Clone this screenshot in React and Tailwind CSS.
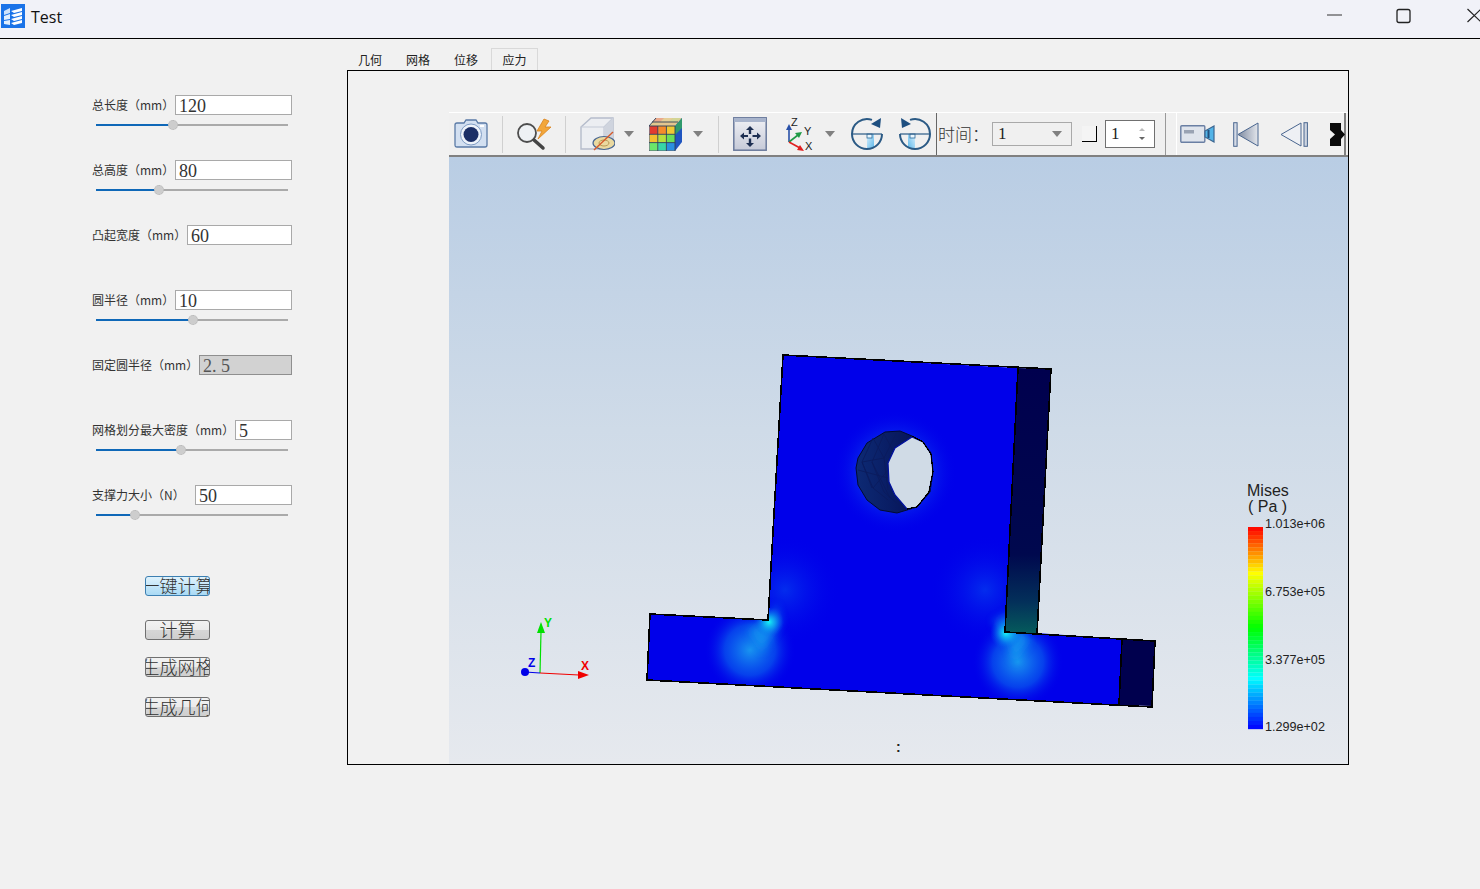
import React from "react";

const fields = [
  { label: "总长度（mm）", value: "120", inputWidth: "w-[117px]", slider: 173 },
  { label: "总高度（mm）", value: "80", inputWidth: "w-[117px]", slider: 159 },
  { label: "凸起宽度（mm）", value: "60", inputWidth: "w-[105px]" },
  { label: "圆半径（mm）", value: "10", inputWidth: "w-[117px]", slider: 193 },
  { label: "固定圆半径（mm）", value: "2. 5", inputWidth: "w-[93px]", disabled: true },
  { label: "网格划分最大密度（mm）", value: "5", inputWidth: "w-[57px]", slider: 181 },
  { label: "支撑力大小（N）", value: "50", inputWidth: "w-[97px]", slider: 135 },
];

const tabs = ["几何", "网格", "位移"];

// colour bar bands, top to bottom
const barStops = [
  [0, [255, 0, 0]],
  [0.23, [255, 255, 0]],
  [0.5, [0, 255, 0]],
  [0.75, [0, 255, 255]],
  [1, [0, 0, 255]],
];
const barColor = (t) => {
  for (let i = 1; i < barStops.length; i++) {
    if (t <= barStops[i][0]) {
      const [a, ca] = barStops[i - 1];
      const [b, cb] = barStops[i];
      const k = (t - a) / (b - a);
      const c = ca.map((v, j) => Math.round(v + (cb[j] - v) * k));
      return `rgb(${c[0]},${c[1]},${c[2]})`;
    }
  }
  return "rgb(0,0,255)";
};
const bands = Array.from({ length: 50 }, (_, i) => barColor((i + 0.5) / 50));

const AppIcon = () => (
  <svg width="24" height="24" viewBox="0 0 24 24" className="ml-px shrink-0">
    <rect width="24" height="24" fill="#1a73e8" />
    <path d="M3 7 L9 4 L9 9 L3 11 Z" fill="#cfe3fb" />
    <path d="M10 7 L21 4 L21 7 L13 9 Z M10 11 L21 8 L21 11 L13 13 Z" fill="#fff" />
    <path d="M3 12 L9 10 L9 15 L3 16 Z M3 17 L9 16 L9 21 L3 20 Z" fill="#e3effd" />
    <path d="M10 15 L21 12 L21 15 L13 17 Z M10 19 L21 16 L21 19 L13 21 Z" fill="#fff" />
  </svg>
);

const WindowButtons = () => (
  <svg width="153" height="38" viewBox="1327 0 153 38" className="shrink-0">
    <path d="M1327 15 H1342" stroke="#333" strokeWidth="1" />
    <rect x="1397" y="9.5" width="13" height="13" rx="2" fill="none" stroke="#222" strokeWidth="1.3" />
    <path d="M1467.5 9 L1481 22 M1481 9 L1467.5 22" stroke="#222" strokeWidth="1.2" />
  </svg>
);

const Slider = ({ end }) => {
  const pct = ((end - 96) / 192) * 100;
  return (
    <div className="relative ml-1 mt-[9px] h-[2px] w-[192px] bg-[#aaaaaa]">
      <div className="h-full bg-[#0f68b8]" style={{ width: `${pct}%` }} />
      <div
        className="absolute top-[-4px] ml-[-5px] size-[10px] rounded-full border border-dotted border-[#b5b5b5] bg-[#cdcdcd]"
        style={{ left: `${pct}%` }}
      />
    </div>
  );
};

const FieldRow = ({ field }) => (
  <div className="h-[65px]">
    <div className="flex h-5 items-center justify-between">
      <span className="whitespace-nowrap text-[12px] text-[#333333]">{field.label}</span>
      <div
        className={`${field.inputWidth} flex h-5 items-center border pl-[3px] pt-px font-['Liberation_Serif',serif] text-[18px] leading-none ${
          field.disabled ? "border-[#8f8f8f] bg-[#d2d2d2] text-[#555555]" : "border-[#a9a9a9] bg-white text-[#333333]"
        }`}
      >
        {field.value}
      </div>
    </div>
    {field.slider && <Slider end={field.slider} />}
  </div>
);

const ActionButton = ({ children, active, className }) => (
  <button
    className={`flex h-5 w-[65px] items-center justify-center overflow-hidden rounded-[3px] border pb-[2px] text-[18px] leading-none text-[#333333] ${
      active
        ? "border-[#3c7fb1] bg-gradient-to-b from-[#dff2fc] to-[#a9daf5]"
        : "border-[#707070] bg-[linear-gradient(#f2f2f2_0%,#ebebeb_50%,#d6d6d6_50%,#cfcfcf_100%)]"
    } ${className}`}
  >
    <span className="shrink-0 whitespace-nowrap font-['Noto_Sans_CJK_SC',serif] font-light">{children}</span>
  </button>
);

const Sep = ({ className }) => <div className={`h-[37px] w-px shrink-0 bg-[#d0d0d0] ${className}`} />;

const DropArrow = ({ className }) => (
  <svg width="10" height="6" viewBox="0 0 10 6" className={`shrink-0 ${className}`}>
    <path d="M0 0 H10 L5 6 Z" fill="#808080" />
  </svg>
);

const CameraIcon = ({ className }) => (
  <svg width="34" height="30" viewBox="0 0 34 30" className={`shrink-0 ${className}`}>
    <path d="M1 6 Q1 4 3 4 H10 L12 1 H22 L24 4 H31 Q33 4 33 6 V26 Q33 28 31 28 H3 Q1 28 1 26 Z" fill="#d3e0f1" stroke="#5a7aa6" strokeWidth="1.3" />
    <circle cx="17" cy="15.5" r="10.5" fill="#eef3fa" stroke="#7f9cc4" />
    <circle cx="17" cy="15.5" r="7.5" fill="#1b2f66" />
    <rect x="26" y="6" width="4" height="2" fill="#fff" />
  </svg>
);

const ZoomIcon = ({ className }) => (
  <svg width="35" height="33" viewBox="0 0 35 33" className={`shrink-0 ${className}`}>
    <circle cx="10" cy="15" r="9" fill="#eef1f4" stroke="#4d4d4d" strokeWidth="1.8" />
    <path d="M17 22 L26 30" stroke="#444" strokeWidth="3.5" strokeLinecap="round" />
    <path d="M27 1 L20 13 L25 13 L21 21 L34 9 L28 9 L32 3 Z" fill="#f2a63a" stroke="#d9821a" strokeWidth="0.8" />
  </svg>
);

const CubeIcon = ({ className }) => (
  <svg width="35" height="34" viewBox="0 0 35 34" className={`shrink-0 ${className}`}>
    <path d="M1 10 L11 1 H33 V22 L24 32 H1 Z" fill="#eceef2" stroke="#b5bccb" strokeWidth="1.4" />
    <path d="M1 10 H24 V32 M24 10 L33 1" fill="none" stroke="#c3c9d6" strokeWidth="1.2" />
    <path d="M24 10 L33 1 V22 L24 32 Z" fill="#cfd4de" />
    <ellipse cx="24" cy="26" rx="11" ry="6.5" fill="#ead9a0" stroke="#4a6791" strokeWidth="1.2" />
    <ellipse cx="24" cy="26" rx="5" ry="3" fill="none" stroke="#b79a55" />
    <path d="M14 33 L33 15" stroke="#d65a2b" strokeWidth="1.4" />
  </svg>
);

const ColorCubeIcon = ({ className }) => {
  const front = ["#e23b30", "#f58b2c", "#f0c933", "#f2c02e", "#b5e03c", "#6adf58", "#6ae56a", "#36d6a8", "#2a8fe0"];
  const top = ["#eaa98c", "#e5cf97", "#d3d596"];
  return (
    <svg width="34" height="33" viewBox="0 0 34 33" className={`shrink-0 ${className}`}>
      <path d="M0 8 L7 0 H33 L26 8 Z" fill="#e3c68f" />
      {top.map((c, i) => (
        <path key={i} d={`M${3 + i * 8.5} 4 L${7 + i * 8.5} 0 H${15 + i * 8.5} L${11 + i * 8.5} 4 Z`} fill={c} />
      ))}
      {front.map((c, i) => (
        <rect key={i} x={0.5 + (i % 3) * 8.6} y={8 + Math.floor(i / 3) * 8.3} width="8.4" height="8.1" fill={c} />
      ))}
      <path d="M26 8 L33 0 V24 L26 33 Z" fill="#1f55c0" />
      <path d="M26 8 L33 0 V10 L26 17 Z" fill="#2f9a6c" />
      <path d="M0 8 H26 V33 H0 Z M8.8 8 V33 M17.4 8 V33 M0 16.3 H26 M0 24.6 H26 M3 4 H29 M7 0 L0 8" fill="none" stroke="#2c3e58" strokeWidth="0.9" />
    </svg>
  );
};

const FitIcon = ({ className }) => (
  <svg width="34" height="34" viewBox="0 0 34 34" className={`shrink-0 ${className}`}>
    <defs>
      <linearGradient id="fitBg" x1="0" y1="0" x2="0" y2="1">
        <stop offset="0" stopColor="#f0f1f5" />
        <stop offset="1" stopColor="#c6cad8" />
      </linearGradient>
    </defs>
    <rect x="0.8" y="0.8" width="32.4" height="32.4" fill="url(#fitBg)" stroke="#6a7a9c" strokeWidth="1.5" />
    <rect x="1" y="1" width="32" height="4" fill="#a8b4cc" />
    <path d="M17 9 L21 13 H18.2 V17 H15.8 V13 H13 Z M17 30 L13 26 H15.8 V21.5 H18.2 V26 H21 Z M7 19 L11 15.5 V18 H15 V20 H11 V22.5 Z M28 19 L24 15.5 V18 H19.5 V20 H24 V22.5 Z" fill="#1e2f52" />
  </svg>
);

const AxesIcon = ({ className }) => (
  <svg width="32" height="36" viewBox="785 116 32 36" className={`shrink-0 ${className}`}>
    <path d="M789 142 V127" stroke="#2850a8" strokeWidth="1.6" />
    <path d="M789 124 L792 130 H786 Z" fill="#2850a8" />
    <path d="M789 142 L798 135" stroke="#1f9a45" strokeWidth="1.6" />
    <path d="M802 132 L799 138 L795 133 Z" fill="#1f9a45" />
    <path d="M789 142 L800 148" stroke="#e02020" strokeWidth="1.6" />
    <path d="M804 151 L797 150 L800 145 Z" fill="#e02020" />
    <g fontSize="11" fill="#222" fontFamily="Liberation Sans, sans-serif">
      <text x="791" y="126">Z</text>
      <text x="804" y="135">Y</text>
      <text x="805" y="150">X</text>
    </g>
  </svg>
);

const RotateIcon = ({ flip, className }) => (
  <svg width="34" height="34" viewBox="0 0 34 34" className={`shrink-0 ${className} ${flip ? "-scale-x-100" : ""}`}>
    <defs>
      <linearGradient id="rotBg" x1="0" y1="0" x2="1" y2="1">
        <stop offset="0" stopColor="#d8effc" />
        <stop offset="1" stopColor="#5db8ea" />
      </linearGradient>
    </defs>
    <path d="M17 17 H24 V30.5 A15 15 0 0 1 17 32 Z" fill="url(#rotBg)" />
    <rect x="17" y="17" width="5" height="4" fill="#eaf6fd" stroke="#2b6a9a" strokeWidth="0.8" />
    <path d="M2 17 H32" stroke="#2b5a85" strokeWidth="1.2" fill="none" />
    <path d="M22 2.9 A15 15 0 0 0 2 17 A15 15 0 0 0 17 32 A15 15 0 0 0 32 17" fill="none" stroke="#2b5a85" strokeWidth="2" />
    <path d="M31 1 L30 11 L21 7 Z" fill="#1e4f80" />
  </svg>
);

const CamcorderIcon = ({ className }) => (
  <svg width="36" height="18" viewBox="0 0 36 18" className={`shrink-0 ${className}`}>
    <rect x="0.8" y="0.8" width="24" height="16.4" rx="1" fill="#dfe4ec" stroke="#6a7fa3" strokeWidth="1.4" />
    <rect x="4" y="5" width="10" height="3.5" fill="#9aa3b3" />
    <path d="M25 6 L34 1 V17 L25 12 Z" fill="#52b4e8" stroke="#3d6690" strokeWidth="1.2" />
    <path d="M28.5 5 V13" stroke="#23507e" strokeWidth="2" />
  </svg>
);

const FirstIcon = ({ className }) => (
  <svg width="26" height="25" viewBox="0 0 26 25" className={`shrink-0 ${className}`}>
    <defs>
      <linearGradient id="firstBg" x1="0" y1="0" x2="1" y2="0">
        <stop offset="0" stopColor="#7e8aa0" />
        <stop offset="1" stopColor="#e3e6ec" />
      </linearGradient>
    </defs>
    <rect x="0.7" y="0.7" width="3.4" height="23.6" fill="#d5dbe6" stroke="#4a668f" />
    <path d="M25 1 V24 L5 12.5 Z" fill="url(#firstBg)" stroke="#4a668f" />
  </svg>
);

const PrevIcon = ({ className }) => (
  <svg width="28" height="25" viewBox="0 0 28 25" className={`shrink-0 ${className}`}>
    <path d="M21 1 V24 L1 12.5 Z" fill="#eef0f4" stroke="#4a668f" />
    <rect x="24" y="0.7" width="3.4" height="23.6" fill="#cdd4e0" stroke="#4a668f" />
  </svg>
);

const NextIcon = ({ className }) => (
  <svg width="15" height="23" viewBox="0 0 15 23" className={`shrink-0 ${className}`}>
    <path d="M0 0 H11 V7 L15 11.5 L11 16 V23 H0 V16 L5 11.5 L0 7 Z" fill="#0a0a0a" />
  </svg>
);

const Toolbar = () => (
  <div className="flex h-[45px] items-center border-t border-b-2 border-t-white border-b-[#808080] bg-[#f0f0f0]">
    <CameraIcon className="ml-[5px]" />
    <Sep className="ml-[14px]" />
    <ZoomIcon className="ml-[14px]" />
    <Sep className="ml-[13px]" />
    <CubeIcon className="ml-[14px]" />
    <DropArrow className="ml-[9px]" />
    <ColorCubeIcon className="ml-[15px]" />
    <DropArrow className="ml-[10px]" />
    <Sep className="ml-[15px]" />
    <FitIcon className="ml-[14px]" />
    <AxesIcon className="ml-[18px]" />
    <DropArrow className="ml-[8px]" />
    <RotateIcon className="ml-[15px]" />
    <RotateIcon flip className="ml-[14px]" />
    <div className="ml-1 h-full w-px shrink-0 bg-[#666666]" />
    <span className="ml-px w-[48px] shrink-0 whitespace-nowrap font-['Noto_Sans_CJK_SC',serif] text-[17px] font-light text-[#333333]">时间：</span>
    <div className="ml-[6px] flex h-6 w-[80px] shrink-0 items-center justify-between border border-[#a9a9a9] bg-[#f0f0f0] pl-[5px] pr-[9px] font-['Liberation_Serif',serif] text-[17px] text-[#222222]">
      1
      <DropArrow />
    </div>
    <div className="ml-[10px] h-4 w-[15px] shrink-0 border-r border-b border-r-black border-b-black bg-[#f4f4f4]" />
    <div className="ml-2 flex h-7 w-[50px] shrink-0 items-center justify-between border border-[#707070] bg-white pl-[5px] pr-[8px] font-['Liberation_Serif',serif] text-[17px] text-[#222222]">
      1
      <svg width="8" height="14" viewBox="0 0 8 14">
        <path d="M4 1 L7 4 H1 Z" fill="#bbbbbb" />
        <path d="M4 13 L7 10 H1 Z" fill="#666666" />
      </svg>
    </div>
    <div className="ml-[10px] h-full w-px shrink-0 bg-[#999999]" />
    <div className="ml-[10px] flex h-full w-[170px] shrink-0 items-center border-l border-r-2 border-l-white border-r-[#808080]">
      <CamcorderIcon className="ml-[3px]" />
      <FirstIcon className="ml-[17px]" />
      <PrevIcon className="ml-[21px]" />
      <NextIcon className="ml-[22px]" />
    </div>
  </div>
);

const meshLines =
  "M873 438 L862 462 L873 488 L888 500 M884 434 L872 462 L884 492 L900 506 M897 432 L884 458 L888 490 M862 462 L884 458 M858 470 L888 478 M873 488 L888 470 M873 438 L884 458 M884 434 L897 458 M862 462 L872 488 M872 462 L890 498";

const ModelView = () => (
  <svg viewBox="449 157 899 607" className="block h-[607px] w-[899px]">
    <defs>
      <clipPath id="faceClip">
        <path d="M783 355 L1018 368 L1005 632 L1036 633 L1122 639 L1119 705 L647 680 L650 614 L768 620 Z" />
      </clipPath>
      <filter id="soft" x="-50%" y="-50%" width="200%" height="200%">
        <feGaussianBlur stdDeviation="4" />
      </filter>
      <radialGradient id="spotBase">
        <stop offset="0" stopColor="#1a9cf0" stopOpacity="0.95" />
        <stop offset="0.55" stopColor="#0a6cee" stopOpacity="0.6" />
        <stop offset="1" stopColor="#0000e8" stopOpacity="0" />
      </radialGradient>
      <radialGradient id="spotHot">
        <stop offset="0" stopColor="#18f5f5" />
        <stop offset="0.4" stopColor="#10b8f0" stopOpacity="0.7" />
        <stop offset="1" stopColor="#0060ee" stopOpacity="0" />
      </radialGradient>
      <radialGradient id="spotSoft">
        <stop offset="0" stopColor="#0650f0" stopOpacity="0.55" />
        <stop offset="1" stopColor="#0000e8" stopOpacity="0" />
      </radialGradient>
      <radialGradient id="holeGlow">
        <stop offset="0.55" stopColor="#0a40f0" stopOpacity="0.6" />
        <stop offset="1" stopColor="#0000e8" stopOpacity="0" />
      </radialGradient>
      <linearGradient id="strip" x1="0" y1="0" x2="0" y2="1">
        <stop offset="0" stopColor="#00004e" />
        <stop offset="0.7" stopColor="#00084e" />
        <stop offset="0.88" stopColor="#03305a" />
        <stop offset="1" stopColor="#055c5c" />
      </linearGradient>
      <linearGradient id="holeWall" x1="0" y1="0" x2="1" y2="0">
        <stop offset="0" stopColor="#0d2a74" />
        <stop offset="1" stopColor="#040c50" />
      </linearGradient>
    </defs>

    {/* part faces */}
    <path d="M783 355 L1018 368 L1005 632 L1036 633 L1122 639 L1119 705 L647 680 L650 614 L768 620 Z" fill="#0000ea" />
    <g clipPath="url(#faceClip)">
      <circle cx="895" cy="472" r="62" fill="url(#holeGlow)" />
      <circle cx="785" cy="590" r="55" fill="url(#spotSoft)" />
      <circle cx="985" cy="590" r="55" fill="url(#spotSoft)" />
      <circle cx="750" cy="650" r="46" fill="url(#spotBase)" />
      <circle cx="1018" cy="662" r="46" fill="url(#spotBase)" />
      <path d="M769 618 L776 604 L781 622 L762 652 L748 630 Z" fill="#12b0f0" opacity="0.6" filter="url(#soft)" />
      <path d="M1005 632 L992 622 L1010 612 L1030 640 L1014 662 Z" fill="#12b0f0" opacity="0.6" filter="url(#soft)" />
      <circle cx="769" cy="622" r="15" fill="url(#spotHot)" />
      <circle cx="1006" cy="633" r="16" fill="url(#spotHot)" />
    </g>
    <path d="M1018 368 L1051 369 L1037 634 L1005 632 Z" fill="url(#strip)" />
    <path d="M1122 639 L1155 641 L1152 706 L1119 705 Z" fill="#00004e" />

    {/* hole */}
    <path d="M885 432 L900 431 L912 436 L923 442 L931 453 L933 472 L930 492 L917 507 L907 510 L897 513 L880 510 L867 500 L858 485 L856 468 L858 458 L867 443 Z" fill="url(#holeWall)" stroke="#020a30" strokeWidth="1" />
    <path d={meshLines} fill="none" stroke="#0a1a5c" strokeWidth="0.8" />
    <path d="M912 437 L923 442 L931 454 L933 472 L929 492 L917 507 L907 509 L895 495 L889 482 L888 463 L895 448 Z" fill="#d0dbe6" stroke="#0010a0" strokeWidth="1.2" />
    <path d="M912 436 L923 442 L931 454 L933 472 L929 492 L917 507 L907 509" fill="none" stroke="#000000" strokeWidth="1.2" shapeRendering="crispEdges" />

    {/* outlines */}
    <g fill="none" stroke="#000" strokeWidth="1.6" shapeRendering="crispEdges">
      <path d="M783 355 L1051 369 L1037 634 L1155 641 L1152 707 L647 680 L650 614 L768 620 Z" />
      <path d="M1018 368 L1005 632 L1037 634 M1122 639 L1119 705" />
    </g>

    {/* orientation axes */}
    <path d="M540 673 L541 632" stroke="#00e000" strokeWidth="1.2" />
    <path d="M541 622 L545 633 L537 633 Z" fill="#00e000" />
    <path d="M540 673 L579 675" stroke="#f00000" strokeWidth="1.2" />
    <path d="M589 675 L578 671 L578 679 Z" fill="#f00000" />
    <path d="M525 672 L540 673" stroke="#0000e8" strokeWidth="1.2" />
    <circle cx="525" cy="672" r="4" fill="#0000e8" />
    <text x="544" y="627" fontSize="12" fontWeight="700" fill="#00e000" fontFamily="Liberation Sans, sans-serif">Y</text>
    <text x="581" y="670" fontSize="12" fontWeight="700" fill="#f00000" fontFamily="Liberation Sans, sans-serif">X</text>
    <text x="528" y="667" fontSize="12" fontWeight="700" fill="#0000e8" fontFamily="Liberation Sans, sans-serif">Z</text>

    {/* scalar bar */}
    {bands.map((c, i) => (
      <rect key={i} x="1248" y={527 + i * 4.04} width="15" height="4.2" fill={c} />
    ))}
    <g fill="#222" fontFamily="Liberation Sans, sans-serif">
      <text x="1247" y="496" fontSize="16">Mises</text>
      <text x="1248" y="512" fontSize="16">( Pa )</text>
      <text x="1265" y="528" fontSize="12.6">1.013e+06</text>
      <text x="1265" y="596" fontSize="12.6">6.753e+05</text>
      <text x="1265" y="664" fontSize="12.6">3.377e+05</text>
      <text x="1265" y="731" fontSize="12.6">1.299e+02</text>
      <text x="896" y="752" fontSize="14" fontWeight="700">:</text>
    </g>
  </svg>
);

export default function App() {
  return (
    <div className="flex h-[889px] w-[1480px] flex-col overflow-hidden bg-[#f1f1f1] font-['Noto_Sans_CJK_SC',sans-serif]">
      {/* title bar */}
      <div className="flex h-[39px] shrink-0 items-start justify-between border-b border-black bg-[#f1f2f8]">
        <div className="flex items-center gap-[6px] pt-[3px]">
          <AppIcon />
          <span className="pt-[2px] font-['Open_Sans',sans-serif] text-[16px] leading-[24px] text-[#111111]">Test</span>
        </div>
        <WindowButtons />
      </div>

      <div className="flex flex-1">
        {/* parameter panel */}
        <div className="w-[347px] shrink-0 pl-[92px] pt-[56px]">
          <div className="w-[200px]">
            {fields.map((f) => (
              <FieldRow key={f.label} field={f} />
            ))}
            <div className="ml-[53px] pt-[26px]">
              <ActionButton active>一键计算</ActionButton>
              <ActionButton className="mt-6">计算</ActionButton>
              <ActionButton className="mt-[17px]">生成网格</ActionButton>
              <ActionButton className="mt-5">生成几何</ActionButton>
            </div>
          </div>
        </div>

        {/* tabs + viewer */}
        <div className="w-[1002px] shrink-0 pt-[9px]">
          <div className="-ml-px flex h-[22px] items-end text-[12px] text-[#222222]">
            {tabs.map((t) => (
              <div key={t} className="flex h-[21px] w-12 items-center justify-center">{t}</div>
            ))}
            <div className="ml-px flex h-[22px] w-[47px] items-center justify-center border border-b-0 border-[#d9d9d9] bg-[#f1f1f1]">应力</div>
          </div>
          <div className="h-[695px] border border-black pl-[101px] pt-[41px]">
            <Toolbar />
            <div className="h-[607px] w-[899px] bg-[linear-gradient(#b9cde4,#cfdbe8_45%,#e6e9ee)]">
              <ModelView />
            </div>
          </div>
        </div>
      </div>
    </div>
  );
}
